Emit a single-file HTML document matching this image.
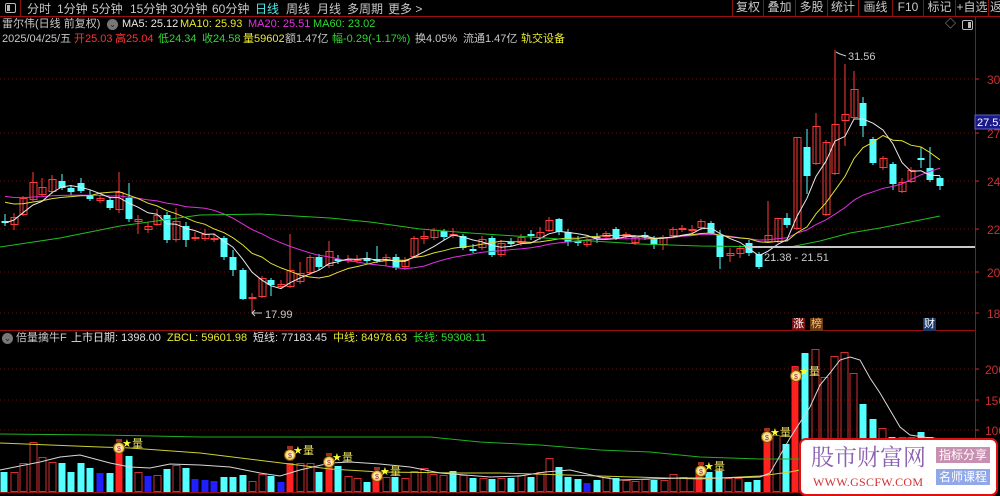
<!DOCTYPE html>
<html><head><meta charset="utf-8"><style>
*{margin:0;padding:0;box-sizing:border-box}
body{width:1000px;height:495px;background:#000;overflow:hidden;position:relative;font-family:"Liberation Sans","Noto Sans CJK SC",sans-serif;color:#c8c8c8}
.a{position:absolute;white-space:nowrap;line-height:1}
.nav{font-size:12px;top:3px}
.btn{position:absolute;top:0;height:16px;border-left:1px solid #8a1010;font-size:12px;text-align:center;line-height:15px;color:#c8c8c8;white-space:nowrap;overflow:hidden}
.t2{font-size:11px}
</style></head><body>
<svg id="s" width="1000" height="495" style="position:absolute;left:0;top:0"></svg>

<div class="a" style="left:0;top:0;width:21px;height:16px;border-right:1px solid #8a1010"></div>
<div class="a" style="left:5px;top:3px;width:11px;height:10px;border:1px solid #bbb;border-radius:2px"><div style="position:absolute;left:1px;top:1px;width:3px;height:6px;background:#bbb"></div></div>
<div class="a nav" style="left:27px">分时</div>
<div class="a nav" style="left:57px">1分钟</div>
<div class="a nav" style="left:92px">5分钟</div>
<div class="a nav" style="left:130px">15分钟</div>
<div class="a nav" style="left:170px">30分钟</div>
<div class="a nav" style="left:212px">60分钟</div>
<div class="a nav" style="left:255px;color:#54e8e8">日线</div>
<div class="a nav" style="left:286px">周线</div>
<div class="a nav" style="left:317px">月线</div>
<div class="a nav" style="left:347px">多周期</div>
<div class="a nav" style="left:388px">更多 &gt;</div>
<div class="btn" style="left:732px;width:31px">复权</div>
<div class="btn" style="left:763px;width:32px">叠加</div>
<div class="btn" style="left:795px;width:32px">多股</div>
<div class="btn" style="left:827px;width:31px">统计</div>
<div class="btn" style="left:858px;width:34px">画线</div>
<div class="btn" style="left:892px;width:31px">F10</div>
<div class="btn" style="left:923px;width:32px">标记</div>
<div class="btn" style="left:955px;width:33px">+自选</div>
<div class="btn" style="left:988px;width:12px;text-align:left;padding-left:1px">返</div>

<div class="a t2" style="left:2px;top:19px">雷尔伟(日线 前复权)</div>
<div class="a" style="left:107px;top:19px;width:11px;height:11px;border-radius:50%;background:#777;color:#222;font-size:8px;text-align:center;line-height:11px">⌄</div>
<div class="a t2" style="left:122px;top:19px;color:#e8e8e8">MA5: 25.12</div>
<div class="a t2" style="left:180px;top:19px;color:#e8e830">MA10: 25.93</div>
<div class="a t2" style="left:248px;top:19px;color:#e830e8">MA20: 25.51</div>
<div class="a t2" style="left:313px;top:19px;color:#30d830">MA60: 23.02</div>
<div class="a" style="left:945px;top:19px;font-size:11px;color:#aaa">◇</div>
<div class="a" style="left:962px;top:20px;width:11px;height:10px;border:1px solid #bbb;border-radius:2px"><div style="position:absolute;right:1px;top:1px;width:3px;height:6px;background:#bbb"></div></div>

<div class="a t2" style="left:2px;top:34px">2025/04/25/五</div>
<div class="a t2" style="left:74px;top:34px;color:#ff3030">开25.03</div>
<div class="a t2" style="left:115px;top:34px;color:#ff3030">高25.04</div>
<div class="a t2" style="left:158px;top:34px;color:#30d830">低24.34</div>
<div class="a t2" style="left:202px;top:34px;color:#30d830">收24.58</div>
<div class="a t2" style="left:243px;top:34px;color:#e8e830">量59602</div>
<div class="a t2" style="left:285px;top:34px">额1.47亿</div>
<div class="a t2" style="left:332px;top:34px;color:#30d830">幅-0.29(-1.17%)</div>
<div class="a t2" style="left:415px;top:34px">换4.05%</div>
<div class="a t2" style="left:463px;top:34px">流通1.47亿</div>
<div class="a t2" style="left:521px;top:34px;color:#e8e830">轨交设备</div>

<div class="a" style="left:2px;top:333px;width:11px;height:11px;border-radius:50%;background:#777;color:#222;font-size:8px;text-align:center;line-height:11px">⌄</div>
<div class="a t2" style="left:16px;top:333px">倍量擒牛F</div>
<div class="a t2" style="left:71px;top:333px;color:#e0e0e0">上市日期: 1398.00</div>
<div class="a t2" style="left:167px;top:333px;color:#e8e830">ZBCL: 59601.98</div>
<div class="a t2" style="left:253px;top:333px;color:#e0e0e0">短线: 77183.45</div>
<div class="a t2" style="left:333px;top:333px;color:#e8e830">中线: 84978.63</div>
<div class="a t2" style="left:413px;top:333px;color:#30d830">长线: 59308.11</div>

<div class="a" style="left:792px;top:318px;width:13px;height:13px;background:#7a1010;color:#fff;font-size:11px;text-align:center;line-height:13px">涨</div>
<div class="a" style="left:810px;top:318px;width:13px;height:13px;background:#6a3a10;color:#ffc070;font-size:11px;text-align:center;line-height:13px">榜</div>
<div class="a" style="left:923px;top:318px;width:13px;height:13px;background:#1a3a6a;color:#fff;font-size:11px;text-align:center;line-height:13px">财</div>

<div class="a" style="left:799px;top:438px;width:199px;height:58px;background:#fff;border:2px solid #e01010;border-radius:7px"></div>
<div class="a" style="left:811px;top:444px;font-size:23px;color:#8a60b0;font-family:'Noto Serif CJK SC','Noto Sans CJK SC',serif">股市财富网</div>
<div class="a" style="left:813px;top:476px;font-size:12px;color:#d03030;font-family:'Liberation Serif',serif;letter-spacing:0.3px">WWW.GSCFW.COM</div>
<div class="a" style="left:936px;top:447px;width:54px;height:16px;background:#c890b0;color:#fff;font-size:12px;text-align:center;line-height:16px">指标分享</div>
<div class="a" style="left:936px;top:469px;width:54px;height:16px;background:#90a8e8;color:#fff;font-size:12px;text-align:center;line-height:16px">名师课程</div>

<script>
const S=document.getElementById('s');let h='';
function L(x1,y1,x2,y2,c,w,d){h+=`<line x1="${x1}" y1="${y1}" x2="${x2}" y2="${y2}" stroke="${c}" stroke-width="${w||1}" ${d?`stroke-dasharray="${d}"`:''}/>`}
function P(pts,c,w){h+=`<polyline fill="none" stroke="${c}" stroke-width="${w||1}" points="${pts.map(p=>p.join(',')).join(' ')}"/>`}
function T(x,y,t,c,s,a){h+=`<text x="${x}" y="${y}" fill="${c}" font-size="${s||11}" font-family="Liberation Sans,sans-serif" ${a?`text-anchor="${a}"`:''}>${t}</text>`}
[79,133,181,229,272,313].forEach(y=>L(0,y,975,y,'#6a1010',1,'1,3'));
[369,400,430].forEach(y=>L(0,y,975,y,'#6a1010',1,'1,3'));
L(0,16.5,1000,16.5,'#9a1010');L(0,330.5,975,330.5,'#9a1010');L(0,492.5,975,492.5,'#9a1010');
L(975.5,16,975.5,495,'#9a1010');
[[30,79],[27,133],[24,181],[22,229],[20,272],[18,313]].forEach(a=>{L(975,a[1],979,a[1],'#c03030');T(987,a[1]+5,a[0],'#c83030',12)});
[[200,369],[150,400],[100,430]].forEach(a=>{L(975,a[1],979,a[1],'#c03030');T(985,a[1]+5,a[0],'#c83030',12)});
const C=[[5,221,223,214,226,'c'],[14,217,225,213,230,'r'],[23,198,215,196,216,'r'],[33,182,200,172,201,'r'],[42,187,195,178,196,'r'],[52,179,192,175,194,'r'],[62,181,188,174,190,'c'],[71,188,192,185,195,'c'],[81,183,191,178,193,'c'],[90,195,199,190,201,'c'],[100,198,201,195,203,'r'],[110,200,208,198,210,'c'],[119,192,210,172,213,'r'],[129,198,219,183,222,'c'],[138,219,222,215,234,'r'],[148,226,230,222,233,'r'],[157,215,225,209,226,'r'],[167,215,240,212,243,'c'],[176,221,240,208,242,'r'],[186,226,240,222,247,'c'],[195,237,239,232,241,'r'],[205,234,239,229,241,'r'],[214,238,240,234,242,'r'],[224,238,257,236,260,'c'],[233,257,270,250,276,'c'],[243,270,299,268,300,'c'],[252,297,299,293,313,'r'],[262,278,297,276,298,'r'],[271,280,285,278,296,'c'],[281,284,287,280,289,'r'],[290,270,287,234,288,'r'],[300,273,282,262,284,'r'],[310,257,273,255,275,'r'],[319,257,267,254,270,'c'],[329,251,266,241,268,'r'],[338,259,261,255,264,'c'],[348,259,261,255,263,'r'],[357,259,261,255,263,'r'],[367,258,261,252,264,'c'],[377,259,261,246,263,'c'],[386,257,261,254,266,'r'],[396,257,268,254,270,'c'],[405,260,267,257,270,'r'],[414,238,257,236,258,'r'],[424,236,239,231,244,'r'],[434,230,238,228,240,'r'],[444,231,237,229,240,'c'],[453,234,236,228,238,'r'],[463,236,248,234,250,'c'],[473,249,251,244,253,'c'],[482,239,248,236,250,'r'],[492,238,255,236,257,'c'],[501,243,255,240,257,'r'],[511,242,244,238,246,'c'],[521,237,243,234,246,'r'],[531,234,236,230,240,'c'],[540,232,238,227,240,'r'],[549,220,231,217,232,'r'],[559,219,232,218,235,'c'],[568,232,242,229,246,'c'],[578,241,243,236,246,'c'],[587,240,245,238,247,'r'],[597,237,239,233,243,'c'],[606,233,237,231,239,'r'],[616,229,238,227,240,'c'],[626,234,237,232,239,'r'],[635,237,243,235,245,'r'],[645,235,237,232,240,'c'],[654,238,245,236,249,'c'],[663,237,245,235,250,'r'],[673,229,236,227,238,'r'],[682,228,230,225,232,'r'],[692,229,231,225,233,'r'],[701,221,228,219,230,'r'],[711,223,233,221,235,'c'],[720,235,257,230,269,'c'],[730,253,256,248,262,'r'],[740,248,254,245,258,'r'],[749,243,253,240,256,'c'],[759,254,267,252,269,'c'],[768,235,242,201,243,'r'],[778,218,242,218,243,'r'],[787,218,225,213,228,'c'],[797,137,229,137,230,'r'],[807,147,176,129,194,'c'],[816,126,164,113,165,'r'],[826,142,215,140,216,'r'],[835,124,174,50,175,'r'],[845,114,121,64,146,'r'],[854,89,118,71,119,'r'],[863,103,126,97,137,'c'],[873,139,163,137,165,'c'],[883,158,168,156,170,'r'],[893,164,184,162,190,'c'],[902,182,192,178,193,'r'],[911,170,182,167,183,'r'],[921,158,160,147,168,'c'],[930,168,180,147,182,'c'],[940,178,186,176,190,'c']];
const cl=C.map(c=>c[5]=='r'?c[1]:c[2]);
C.forEach(c=>{let[x,t,b,hi,lo,ty]=c;let col=ty=='r'?'#ff3c3c':'#54ffff';L(x,hi,x,lo,col);
 if(b-t<2){L(x-3.5,t+1,x+3.5,t+1,col)}else if(ty=='r'){h+=`<rect x="${x-3}" y="${t+0.5}" width="7" height="${b-t-1}" fill="none" stroke="${col}"/>`}else{h+=`<rect x="${x-3.5}" y="${t}" width="7" height="${b-t}" fill="${col}"/>`}});
function ma(n,col,init){let pts=[];for(let i=0;i<cl.length;i++){let s=0,k=0;for(let j=Math.max(0,i-n+1);j<=i;j++){s+=cl[j];k++}let v=s/k;if(init&&i<n){v=(v*k+init*(n-k))/n}pts.push([C[i][0],v.toFixed(1)])}P(pts,col)}
ma(20,'#e030e0',195);ma(10,'#e0e030',200);ma(5,'#e8e8e8');
P([[0,247],[60,238],[120,226],[200,215],[260,214],[330,218],[370,222],[420,229],[470,233],[560,239],[640,244],[700,246],[790,247],[820,241],[850,233],[880,228],[940,216]],'#20c020');
L(745,247,975,247,'#c8c8c8',2);
T(764,261,'21.38 - 21.51','#c8c8c8',11);
P([[836,52],[840,54],[846,56]],'#c8c8c8');T(848,60,'31.56','#c8c8c8',11);
P([[252,313],[262,313]],'#c8c8c8');P([[255,310],[252,313],[255,316]],'#c8c8c8');T(265,318,'17.99','#c8c8c8',11);
h+=`<rect x="975" y="115" width="26" height="14" fill="#1a1a8a" stroke="#6060c0"/>`;T(977,126,'27.51','#fff',11);
const V=[[4,472,'c'],[14,472,'r'],[23,463,'r'],[33,442,'r'],[42,457,'r'],[52,462,'r'],[62,463,'c'],[71,472,'c'],[81,463,'c'],[90,468,'c'],[100,473,'b'],[110,473,'c'],[119,453,'s'],[129,456,'c'],[138,472,'r'],[148,476,'b'],[157,475,'r'],[167,469,'c'],[176,465,'r'],[186,468,'c'],[195,479,'b'],[205,480,'b'],[214,481,'b'],[224,477,'c'],[233,477,'c'],[243,475,'c'],[252,481,'r'],[262,474,'r'],[271,476,'c'],[281,482,'b'],[290,463,'s'],[300,463,'r'],[310,463,'r'],[319,472,'c'],[329,467,'s'],[338,466,'c'],[348,476,'r'],[357,478,'r'],[367,482,'c'],[376,474,'s'],[386,477,'r'],[395,477,'c'],[405,478,'r'],[414,471,'r'],[424,468,'r'],[433,474,'r'],[443,475,'r'],[453,471,'c'],[463,475,'r'],[473,478,'c'],[483,478,'r'],[492,479,'c'],[501,478,'r'],[511,478,'c'],[521,475,'r'],[531,477,'c'],[540,472,'r'],[549,458,'r'],[559,467,'c'],[568,477,'c'],[578,479,'c'],[587,483,'b'],[597,480,'c'],[606,477,'r'],[616,478,'c'],[626,480,'r'],[635,481,'r'],[645,479,'r'],[654,480,'c'],[664,480,'r'],[673,474,'r'],[683,477,'r'],[690,478,'r'],[699,468,'s'],[709,472,'c'],[719,471,'c'],[728,478,'r'],[738,478,'r'],[748,482,'c'],[757,480,'c'],[767,437,'s'],[776,435,'r'],[786,444,'c'],[795,366,'s'],[805,353,'c'],[815,349,'r'],[824,377,'r'],[834,356,'r'],[844,352,'r'],[853,373,'r'],[863,404,'c'],[873,419,'c'],[882,428,'r'],[892,437,'c'],[902,437,'r'],[911,437,'r'],[921,432,'c'],[930,437,'c']];
const VC={c:'#54ffff',b:'#2020ff',s:'#ff2020'};
V.forEach(v=>{let[x,t,ty]=v;if(ty=='r')h+=`<rect x="${x-3}" y="${t+0.5}" width="7" height="${491-t}" fill="none" stroke="#d03030"/>`;else h+=`<rect x="${x-3.5}" y="${t}" width="7" height="${492-t}" fill="${VC[ty]}"/>`});
P([[0,434],[100,435],[200,437],[350,437],[430,437],[480,442],[540,445],[600,450],[650,452],[700,457],[760,459],[800,459]],'#20b020');
P([[0,443],[100,447],[130,448],[200,453],[330,469],[380,472],[460,473],[500,473],[600,476],[700,479],[760,476],[790,472],[800,470]],'#d0d030');
P([[0,470],[20,466],[40,462],[60,457],[80,455],[110,463],[130,467],[150,468],[170,464],[200,465],[230,467],[260,473],[280,476],[300,470],[330,463],[350,462],[380,464],[410,467],[440,473],[490,477],[520,476],[545,472],[570,470],[600,477],[620,480],[680,478],[720,478],[760,477],[770,473],[790,438],[810,407],[820,385],[830,373],[840,360],[850,357],[860,360],[870,378],[880,393],[890,410],[900,427],[910,435],[930,438],[960,440]],'#d8d8d8');
[[119,448],[290,455],[329,462],[377,476],[701,471],[767,437],[796,376]].forEach(m=>{let[x,y]=m;
 h+=`<circle cx="${x}" cy="${y}" r="5.5" fill="#f0d050" stroke="#8a5010"/><circle cx="${x}" cy="${y}" r="3.5" fill="#fff0c0"/><text x="${x}" y="${y+3}" font-size="7" fill="#a02020" text-anchor="middle" font-family="Liberation Sans,sans-serif">$</text><rect x="${x-3}" y="${y-9}" width="6" height="3" fill="#a03020"/>`;
 h+=`<text x="${x+3}" y="${y-1}" font-size="11" fill="#ffff30" font-family="DejaVu Sans,sans-serif">★</text><text x="${x+13}" y="${y-1}" font-size="11" fill="#e8e060" font-family="Noto Sans CJK SC,sans-serif">量</text>`});
S.innerHTML=h;
</script>
</body></html>
